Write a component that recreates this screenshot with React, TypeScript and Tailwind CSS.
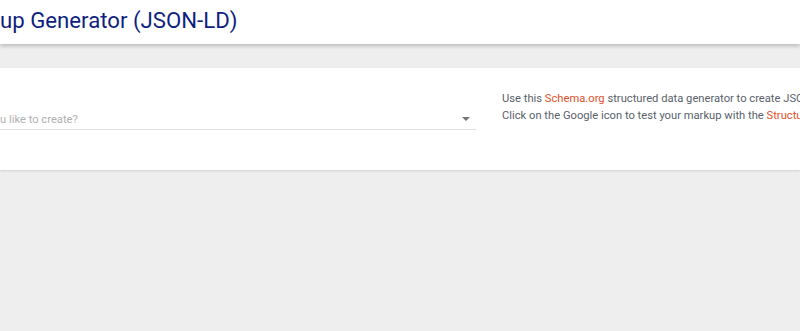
import React from "react";

export default function App() {
  return (
    <div
      className="min-h-[331px] w-[800px] overflow-hidden bg-[#eeeeee]"
      style={{ fontFamily: "Roboto, 'Liberation Sans', sans-serif" }}
    >
      <header className="relative z-10 h-[44px] bg-white shadow-[0_2px_4px_rgba(0,0,0,0.22)]">
        <h1 className="whitespace-nowrap pt-[5px] text-[22.2px] leading-[30px] font-normal text-[#0f1f80]">
          up Generator (JSON-LD)
        </h1>
      </header>

      <main className="mt-[24px]">
        <section className="flex h-[102px] bg-white shadow-[0_1px_2px_rgba(0,0,0,0.12)]">
          <div className="w-[476px] shrink-0 pt-[40px]">
            <div className="flex h-[22px] items-center justify-between border-b border-[#e0e0e0] pr-[6px]">
              <span className="whitespace-nowrap pt-[2px] text-[11.2px] leading-[18px] text-[#b0b0b0]">
                u like to create?
              </span>
              <span className="h-0 w-0 border-x-[4px] border-t-[4px] border-x-transparent border-t-[#757575]" />
            </div>
          </div>
          <div className="ml-[26px] min-w-0 flex-1 overflow-hidden pt-[22px] text-[11.2px] leading-[17px] text-[#5a5f6b]">
            <p className="whitespace-nowrap">
              Use this <span className="text-[#e0502b]">Schema.org</span> structured data generator to create JSON-LD markups.
            </p>
            <p className="whitespace-nowrap">
              Click on the Google icon to test your markup with the <span className="text-[#e0502b]">Structured Data Testing Tool</span>.
            </p>
          </div>
        </section>
      </main>
    </div>
  );
}
